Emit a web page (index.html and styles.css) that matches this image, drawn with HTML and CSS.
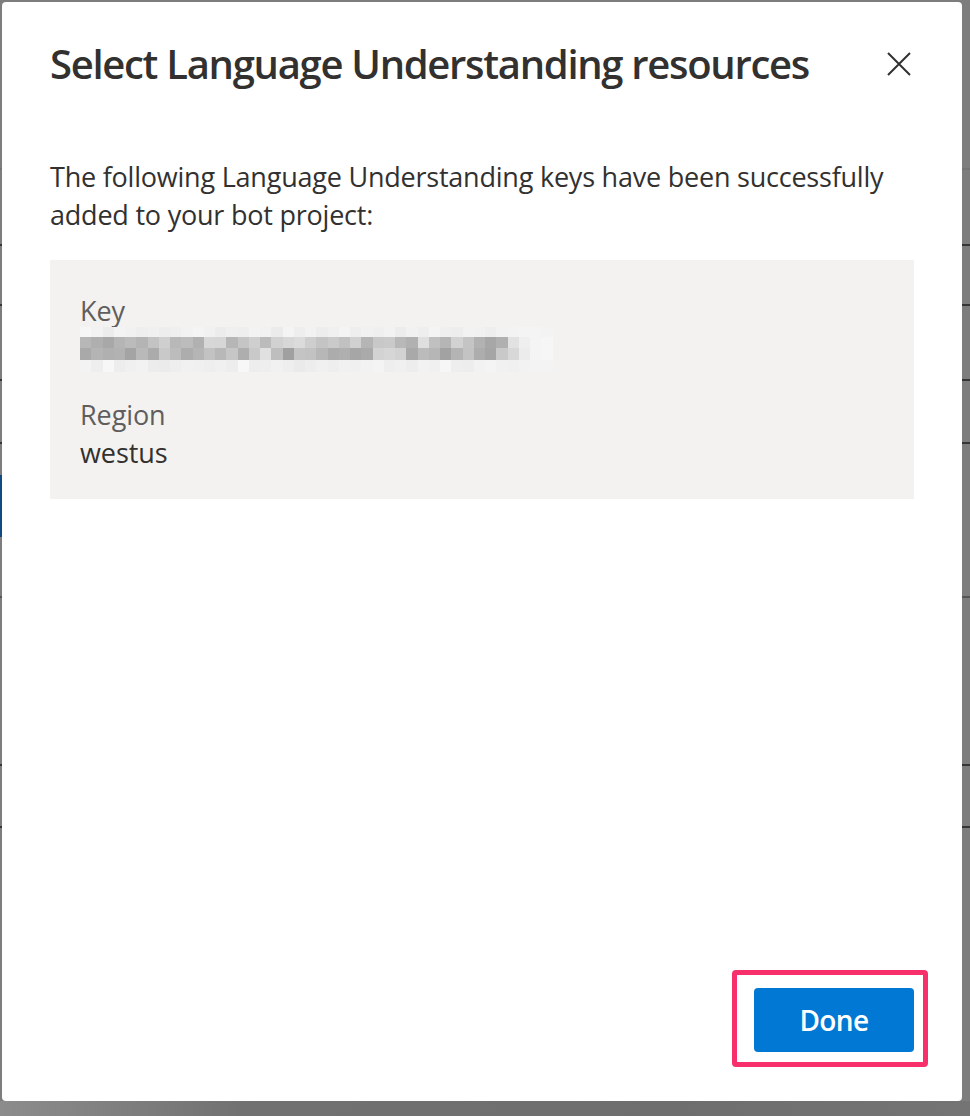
FILE: index.html
```html
<!DOCTYPE html>
<html lang="en">
<head>
<meta charset="utf-8">
<title>Select Language Understanding resources</title>
<link rel="stylesheet" href="styles.css">
</head>
<body>
<div class="dialog" role="dialog" aria-labelledby="dlg-title">
  <div class="dialog-header">
    <h1 id="dlg-title" class="dialog-title">Select Language Understanding resources</h1>
    <button class="close-btn" aria-label="Close">
      <svg width="24" height="24" viewBox="0 0 24 24" aria-hidden="true"><path d="M1 1 L23 23 M23 1 L1 23" stroke="#323130" stroke-width="2" fill="none"/></svg>
    </button>
  </div>
  <div class="dialog-body">
    <p class="intro">The following Language Understanding keys have been successfully added to your bot project:</p>
    <div class="key-box">
      <div class="field">
        <div class="field-label">Key</div>
        <div class="field-value key-value">
          <svg class="pixelated" width="484" height="45" viewBox="0 0 473 45" preserveAspectRatio="none" shape-rendering="crispEdges" aria-label="redacted key">
            <g class="row1">
              <rect x="0" y="0" width="11" height="10" fill="#f6f6f6"/><rect x="11" y="0" width="11" height="10" fill="#f2f2f2"/><rect x="22" y="0" width="11" height="10" fill="#ececec"/><rect x="33" y="0" width="11" height="10" fill="#f3f3f3"/><rect x="44" y="0" width="11" height="10" fill="#f1f1f1"/><rect x="55" y="0" width="11" height="10" fill="#eeeeee"/><rect x="66" y="0" width="11" height="10" fill="#f0f0f0"/><rect x="77" y="0" width="11" height="10" fill="#ededed"/><rect x="88" y="0" width="11" height="10" fill="#efefef"/><rect x="99" y="0" width="11" height="10" fill="#f2f2f2"/><rect x="110" y="0" width="11" height="10" fill="#f4f4f4"/><rect x="121" y="0" width="11" height="10" fill="#f1f1f1"/><rect x="132" y="0" width="11" height="10" fill="#ececec"/><rect x="143" y="0" width="11" height="10" fill="#efefef"/><rect x="154" y="0" width="11" height="10" fill="#eeeeee"/><rect x="165" y="0" width="11" height="10" fill="#f3f3f3"/><rect x="176" y="0" width="11" height="10" fill="#f1f1f1"/><rect x="187" y="0" width="11" height="10" fill="#ebebeb"/><rect x="198" y="0" width="11" height="10" fill="#f4f4f4"/><rect x="209" y="0" width="11" height="10" fill="#eeeeee"/><rect x="220" y="0" width="11" height="10" fill="#f2f2f2"/><rect x="231" y="0" width="11" height="10" fill="#ededed"/><rect x="242" y="0" width="11" height="10" fill="#f0f0f0"/><rect x="253" y="0" width="11" height="10" fill="#f4f4f4"/><rect x="264" y="0" width="11" height="10" fill="#eeeeee"/><rect x="275" y="0" width="11" height="10" fill="#f1f1f1"/><rect x="286" y="0" width="11" height="10" fill="#efefef"/><rect x="297" y="0" width="11" height="10" fill="#f2f2f2"/><rect x="308" y="0" width="11" height="10" fill="#ececec"/><rect x="319" y="0" width="11" height="10" fill="#f1f1f1"/><rect x="330" y="0" width="11" height="10" fill="#eeeeee"/><rect x="341" y="0" width="11" height="10" fill="#f4f4f4"/><rect x="352" y="0" width="11" height="10" fill="#efefef"/><rect x="363" y="0" width="11" height="10" fill="#ededed"/><rect x="374" y="0" width="11" height="10" fill="#f2f2f2"/><rect x="385" y="0" width="11" height="10" fill="#f1f1f1"/><rect x="396" y="0" width="11" height="10" fill="#eeeeee"/><rect x="407" y="0" width="11" height="10" fill="#f2f2f2"/><rect x="418" y="0" width="11" height="10" fill="#f3f3f3"/><rect x="429" y="0" width="11" height="10" fill="#f4f4f4"/><rect x="440" y="0" width="11" height="10" fill="#f4f4f4"/><rect x="451" y="0" width="11" height="10" fill="#f3f3f3"/>
            </g>
            <g class="row2">
              <rect x="0" y="10" width="11" height="11" fill="#b7b7b7"/><rect x="11" y="10" width="11" height="11" fill="#afafaf"/><rect x="22" y="10" width="11" height="11" fill="#a8a8a8"/><rect x="33" y="10" width="11" height="11" fill="#b5b5b5"/><rect x="44" y="10" width="11" height="11" fill="#bbbbbb"/><rect x="55" y="10" width="11" height="11" fill="#b4b4b4"/><rect x="66" y="10" width="11" height="11" fill="#c3c3c3"/><rect x="77" y="10" width="11" height="11" fill="#cfcfcf"/><rect x="88" y="10" width="11" height="11" fill="#b8b8b8"/><rect x="99" y="10" width="11" height="11" fill="#bcbcbc"/><rect x="110" y="10" width="11" height="11" fill="#b1b1b1"/><rect x="121" y="10" width="11" height="11" fill="#d7d7d7"/><rect x="132" y="10" width="11" height="11" fill="#d6d6d6"/><rect x="143" y="10" width="11" height="11" fill="#b6b6b6"/><rect x="154" y="10" width="11" height="11" fill="#c5c5c5"/><rect x="165" y="10" width="11" height="11" fill="#cfcfcf"/><rect x="176" y="10" width="11" height="11" fill="#bbbbbb"/><rect x="187" y="10" width="11" height="11" fill="#d1d1d1"/><rect x="198" y="10" width="11" height="11" fill="#d7d7d7"/><rect x="209" y="10" width="11" height="11" fill="#dbdbdb"/><rect x="220" y="10" width="11" height="11" fill="#cecece"/><rect x="231" y="10" width="11" height="11" fill="#c4c4c4"/><rect x="242" y="10" width="11" height="11" fill="#cacaca"/><rect x="253" y="10" width="11" height="11" fill="#c1c1c1"/><rect x="264" y="10" width="11" height="11" fill="#d1d1d1"/><rect x="275" y="10" width="11" height="11" fill="#b5b5b5"/><rect x="286" y="10" width="11" height="11" fill="#c8c8c8"/><rect x="297" y="10" width="11" height="11" fill="#cacaca"/><rect x="308" y="10" width="11" height="11" fill="#b8b8b8"/><rect x="319" y="10" width="11" height="11" fill="#b1b1b1"/><rect x="330" y="10" width="11" height="11" fill="#dfdfdf"/><rect x="341" y="10" width="11" height="11" fill="#c0c0c0"/><rect x="352" y="10" width="11" height="11" fill="#b5b5b5"/><rect x="363" y="10" width="11" height="11" fill="#d2d2d2"/><rect x="374" y="10" width="11" height="11" fill="#c4c4c4"/><rect x="385" y="10" width="11" height="11" fill="#b2b2b2"/><rect x="396" y="10" width="11" height="11" fill="#a7a7a7"/><rect x="407" y="10" width="11" height="11" fill="#b0b0b0"/><rect x="418" y="10" width="11" height="11" fill="#e2e2e2"/><rect x="429" y="10" width="11" height="11" fill="#efefef"/><rect x="440" y="10" width="11" height="11" fill="#f4f4f4"/><rect x="451" y="10" width="11" height="11" fill="#f6f6f6"/>
            </g>
            <g class="row3">
              <rect x="0" y="21" width="11" height="12" fill="#a9a9a9"/><rect x="11" y="21" width="11" height="12" fill="#b4b4b4"/><rect x="22" y="21" width="11" height="12" fill="#b0b0b0"/><rect x="33" y="21" width="11" height="12" fill="#b2b2b2"/><rect x="44" y="21" width="11" height="12" fill="#a4a4a4"/><rect x="55" y="21" width="11" height="12" fill="#b9b9b9"/><rect x="66" y="21" width="11" height="12" fill="#ababab"/><rect x="77" y="21" width="11" height="12" fill="#c9c9c9"/><rect x="88" y="21" width="11" height="12" fill="#bcbcbc"/><rect x="99" y="21" width="11" height="12" fill="#adadad"/><rect x="110" y="21" width="11" height="12" fill="#b5b5b5"/><rect x="121" y="21" width="11" height="12" fill="#c2c2c2"/><rect x="132" y="21" width="11" height="12" fill="#b8b8b8"/><rect x="143" y="21" width="11" height="12" fill="#c6c6c6"/><rect x="154" y="21" width="11" height="12" fill="#aeaeae"/><rect x="165" y="21" width="11" height="12" fill="#c9c9c9"/><rect x="176" y="21" width="11" height="12" fill="#e0e0e0"/><rect x="187" y="21" width="11" height="12" fill="#bebebe"/><rect x="198" y="21" width="11" height="12" fill="#a0a0a0"/><rect x="209" y="21" width="11" height="12" fill="#c4c4c4"/><rect x="220" y="21" width="11" height="12" fill="#c2c2c2"/><rect x="231" y="21" width="11" height="12" fill="#b7b7b7"/><rect x="242" y="21" width="11" height="12" fill="#acacac"/><rect x="253" y="21" width="11" height="12" fill="#afafaf"/><rect x="264" y="21" width="11" height="12" fill="#a6a6a6"/><rect x="275" y="21" width="11" height="12" fill="#aaaaaa"/><rect x="286" y="21" width="11" height="12" fill="#d3d3d3"/><rect x="297" y="21" width="11" height="12" fill="#d6d6d6"/><rect x="308" y="21" width="11" height="12" fill="#d2d2d2"/><rect x="319" y="21" width="11" height="12" fill="#a9a9a9"/><rect x="330" y="21" width="11" height="12" fill="#bbbbbb"/><rect x="341" y="21" width="11" height="12" fill="#b6b6b6"/><rect x="352" y="21" width="11" height="12" fill="#a2a2a2"/><rect x="363" y="21" width="11" height="12" fill="#b4b4b4"/><rect x="374" y="21" width="11" height="12" fill="#c3c3c3"/><rect x="385" y="21" width="11" height="12" fill="#adadad"/><rect x="396" y="21" width="11" height="12" fill="#a5a5a5"/><rect x="407" y="21" width="11" height="12" fill="#c9c9c9"/><rect x="418" y="21" width="11" height="12" fill="#d8d8d8"/><rect x="429" y="21" width="11" height="12" fill="#ececec"/><rect x="440" y="21" width="11" height="12" fill="#f4f4f4"/><rect x="451" y="21" width="11" height="12" fill="#f6f6f6"/>
            </g>
            <g class="row4">
              <rect x="0" y="33" width="11" height="12" fill="#f3f3f3"/><rect x="11" y="33" width="11" height="12" fill="#eeeeee"/><rect x="22" y="33" width="11" height="12" fill="#f7f7f7"/><rect x="33" y="33" width="11" height="12" fill="#ededed"/><rect x="44" y="33" width="11" height="12" fill="#f0f0f0"/><rect x="55" y="33" width="11" height="12" fill="#f2f2f2"/><rect x="66" y="33" width="11" height="12" fill="#ececec"/><rect x="77" y="33" width="11" height="12" fill="#ebebeb"/><rect x="88" y="33" width="11" height="12" fill="#eeeeee"/><rect x="99" y="33" width="11" height="12" fill="#f1f1f1"/><rect x="110" y="33" width="11" height="12" fill="#f0f0f0"/><rect x="121" y="33" width="11" height="12" fill="#eeeeee"/><rect x="132" y="33" width="11" height="12" fill="#f0f0f0"/><rect x="143" y="33" width="11" height="12" fill="#ededed"/><rect x="154" y="33" width="11" height="12" fill="#f7f7f7"/><rect x="165" y="33" width="11" height="12" fill="#ededed"/><rect x="176" y="33" width="11" height="12" fill="#eeeeee"/><rect x="187" y="33" width="11" height="12" fill="#f1f1f1"/><rect x="198" y="33" width="11" height="12" fill="#eeeeee"/><rect x="209" y="33" width="11" height="12" fill="#eaeaea"/><rect x="220" y="33" width="11" height="12" fill="#ededed"/><rect x="231" y="33" width="11" height="12" fill="#f0f0f0"/><rect x="242" y="33" width="11" height="12" fill="#eeeeee"/><rect x="253" y="33" width="11" height="12" fill="#f1f1f1"/><rect x="264" y="33" width="11" height="12" fill="#f0f0f0"/><rect x="275" y="33" width="11" height="12" fill="#f2f2f2"/><rect x="286" y="33" width="11" height="12" fill="#f4f4f4"/><rect x="297" y="33" width="11" height="12" fill="#eeeeee"/><rect x="308" y="33" width="11" height="12" fill="#f0f0f0"/><rect x="319" y="33" width="11" height="12" fill="#ededed"/><rect x="330" y="33" width="11" height="12" fill="#f2f2f2"/><rect x="341" y="33" width="11" height="12" fill="#f0f0f0"/><rect x="352" y="33" width="11" height="12" fill="#f6f6f6"/><rect x="363" y="33" width="11" height="12" fill="#eeeeee"/><rect x="374" y="33" width="11" height="12" fill="#ededed"/><rect x="385" y="33" width="11" height="12" fill="#f2f2f2"/><rect x="396" y="33" width="11" height="12" fill="#f4f4f4"/><rect x="407" y="33" width="11" height="12" fill="#f1f1f1"/><rect x="418" y="33" width="11" height="12" fill="#f0f0f0"/><rect x="429" y="33" width="11" height="12" fill="#f2f2f2"/><rect x="440" y="33" width="11" height="12" fill="#f3f3f3"/><rect x="451" y="33" width="11" height="12" fill="#f3f3f3"/>
            </g>
          </svg>
        </div>
      </div>
      <div class="field">
        <div class="field-label">Region</div>
        <div class="field-value">westus</div>
      </div>
    </div>
  </div>
  <div class="dialog-footer">
    <div class="done-wrap">
      <button class="primary-btn">Done</button>
      <span class="highlight" aria-hidden="true"></span>
    </div>
  </div>
</div>
</body>
</html>
```

FILE: styles.css
```css
html, body {
  margin: 0;
  padding: 0;
}

body {
  font-family: "Open Sans", "Noto Sans", "Liberation Sans", sans-serif;
  color: #323130;
  background-color: #7d7d7d;
  background-image:
    linear-gradient(#0f4b80, #0f4b80),
    linear-gradient(to right, #8c8c8c, #717171 25%, #6e6e6e 70%, #747474),
    linear-gradient(to bottom,
      transparent 0 168px, #747474 168px 170px,
      transparent 170px 244px, #353535 244px 246px,
      transparent 246px 304px, #353535 304px 306px,
      transparent 306px 379px, #353535 379px 381px,
      transparent 381px 442px, #353535 442px 444px,
      transparent 444px 596px, #555555 596px 598px,
      transparent 598px 764px, #353535 764px 766px,
      transparent 766px 826px, #353535 826px 828px,
      transparent 828px);
  background-repeat: no-repeat;
  background-size: 2px 62px, 100% 15px, 100% 100%;
  background-position: 0 475px, 0 1101px, 0 0;
  min-height: 1116px;
  padding-top: 2px;
  padding-left: 2px;
  box-sizing: border-box;
}

.dialog {
  width: 960px;
  height: 1099px;
  background: #ffffff;
  border-radius: 4px;
  display: flex;
  flex-direction: column;
  box-sizing: border-box;
}

.dialog-header {
  display: flex;
  justify-content: space-between;
  align-items: flex-start;
  padding: 34px 51px 0 48px;
}

.dialog-title {
  margin: 0;
  font-size: 40px;
  line-height: 56px;
  font-weight: 600;
  letter-spacing: -1.3px;
  color: #323130;
}

.close-btn {
  margin-top: 16px;
  width: 24px;
  height: 24px;
  padding: 0;
  border: 0;
  background: transparent;
  display: block;
}

.close-btn svg {
  display: block;
}

.dialog-body {
  padding: 0 48px;
}

.intro {
  margin: 66px 0 0;
  font-size: 27px;
  line-height: 38px;
  letter-spacing: -0.22px;
  color: #323130;
}

.key-box {
  margin-top: 26px;
  background: #f3f2f1;
  padding: 32px 30px 23px;
  height: 239px;
  box-sizing: border-box;
  display: flex;
  flex-direction: column;
  gap: 31px;
}

.field-label {
  font-size: 27px;
  line-height: 38px;
  letter-spacing: -0.1px;
  color: #605e5c;
}

.field-value {
  font-size: 27px;
  line-height: 38px;
  letter-spacing: -0.1px;
  color: #323130;
}

.key-value {
  height: 38px;
}

.pixelated {
  display: block;
  margin-top: -3px;
}

.dialog-footer {
  margin-top: auto;
  display: flex;
  justify-content: flex-end;
  padding: 0 48px 49px;
}

.done-wrap {
  position: relative;
}

.primary-btn {
  display: block;
  width: 160px;
  height: 64px;
  border: 0;
  border-radius: 4px;
  background: #0078d4;
  color: #ffffff;
  font-family: "Open Sans", "Noto Sans", "Liberation Sans", sans-serif;
  font-size: 28px;
  font-weight: 600;
  letter-spacing: -0.6px;
  padding: 0;
}

.highlight {
  position: absolute;
  top: -18px;
  left: -22px;
  width: 196px;
  height: 97px;
  border: 5px solid #f7306c;
  border-radius: 4px;
  box-sizing: border-box;
  pointer-events: none;
}
```
